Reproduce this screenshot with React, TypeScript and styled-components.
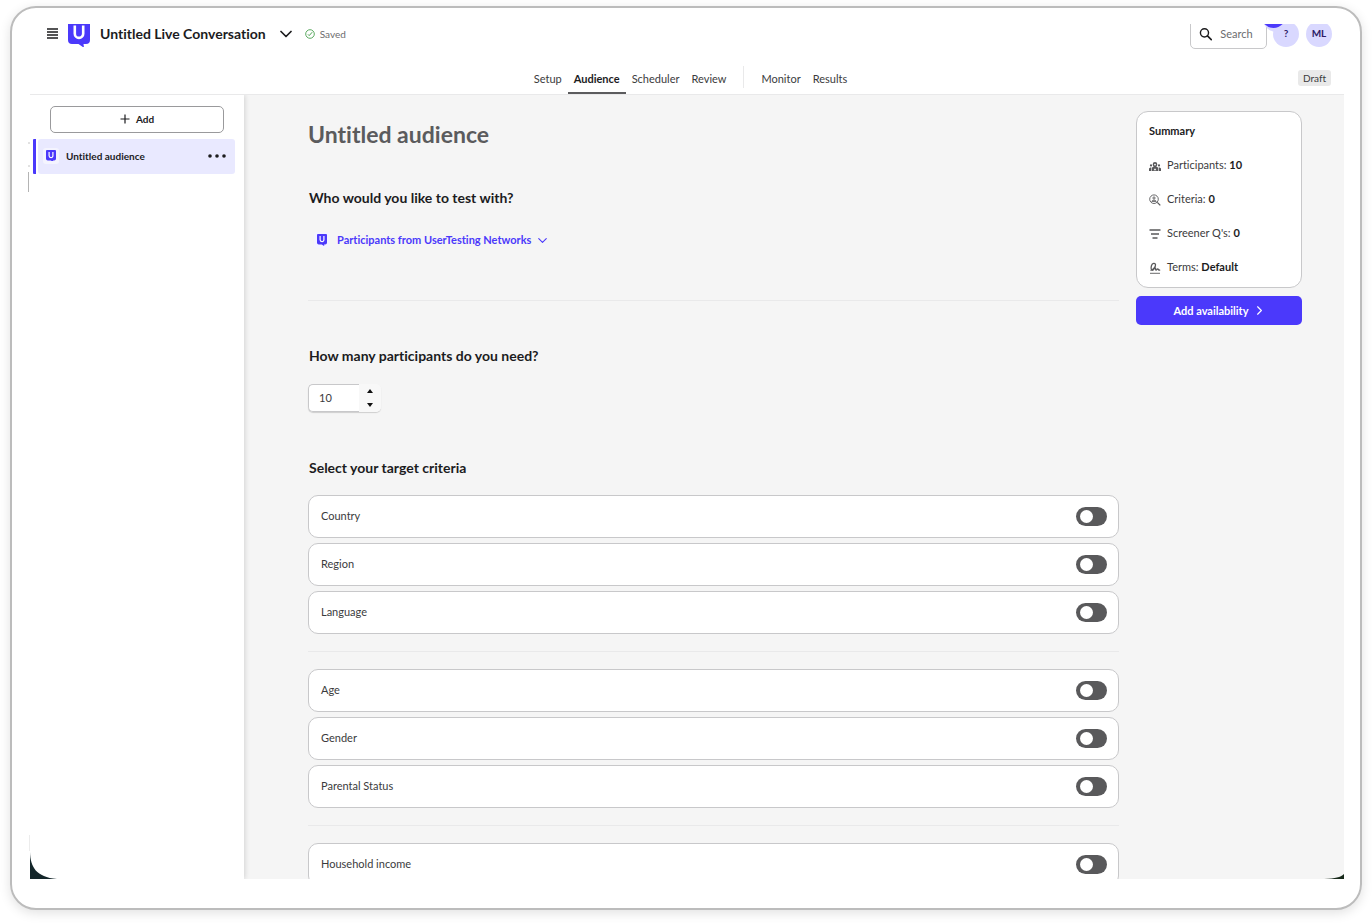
import React, { useState } from 'react';
import styled, { createGlobalStyle, css } from 'styled-components';

const color = {
  brand: '#4b39fb',
  brandSoft: '#e9e9ff',
  avatar: '#d9d8ff',
  ink: '#1c1c1e',
  text: '#3b3b3d',
  muted: '#6c6c6e',
  canvas: '#f5f5f5',
  line: '#e9e9ea',
  border: '#c8c8ca',
};

const GlobalStyle = createGlobalStyle`
  *, *::before, *::after { box-sizing: border-box; }
  body {
    margin: 0;
    background: #fff;
    color: ${color.text};
    font-family: Lato, "Liberation Sans", sans-serif;
    font-size: 11px;
    font-variant-ligatures: none;
    line-height: 16px;
  }
  button, input { font: inherit; font-variant-ligatures: none; color: inherit; }
`;

const Page = styled.div`
  height: 100vh;
  padding: 6px 10px 14px;
`;

const Frame = styled.div`
  position: relative;
  height: 100%;
  padding: 16px 16px 29px 18px;
  border: 2px solid #bcbcbc;
  border-radius: 26px;
  box-shadow: 0 3px 12px rgba(0, 0, 0, 0.12);
`;

const Screen = styled.div`
  position: relative;
  display: flex;
  flex-direction: column;
  height: 100%;
  overflow: hidden;
`;

const Header = styled.header`
  position: relative;
  z-index: 1;
  flex: none;
  border-bottom: 1px solid ${color.line};
  background: #fff;
`;

const TopBar = styled.div`
  display: flex;
  align-items: center;
  justify-content: space-between;
  height: 36px;
  margin-top: -8px;
  padding: 0 12px 0 17px;
`;

const Cluster = styled.div<{ $gap: number }>`
  display: flex;
  align-items: center;
  gap: ${(p) => p.$gap}px;
`;

const PlainButton = styled.button`
  display: inline-flex;
  align-items: center;
  padding: 0;
  border: 0;
  background: none;
  cursor: pointer;
`;

const TitleButton = styled(PlainButton)`
  gap: 14px;
  color: ${color.ink};
  font-size: 14px;
  font-weight: 700;
  line-height: 20px;
`;

const Saved = styled.span`
  display: flex;
  align-items: center;
  gap: 5px;
  margin-left: 3px;
  color: ${color.muted};
  font-size: 10px;
`;

const SearchBox = styled.label`
  display: flex;
  align-items: center;
  gap: 8px;
  width: 77px;
  height: 30px;
  padding: 0 8px;
  border: 1px solid ${color.border};
  border-radius: 5px;

  input {
    width: 40px;
    min-width: 0;
    padding: 0;
    border: 0;
    outline: 0;
    background: none;
  }
  input::placeholder { color: ${color.muted}; opacity: 1; }
`;

const RoundButton = styled.button`
  position: relative;
  width: 26px;
  height: 26px;
  padding: 0 0 2px;
  border: 0;
  border-radius: 50%;
  background: ${color.avatar};
  color: #2d1a66;
  font-size: 10px;
  font-weight: 700;
`;

const NoticeDot = styled.span`
  position: absolute;
  top: -18px;
  left: -12px;
  width: 25px;
  height: 25px;
  border-radius: 50%;
  background: ${color.brand};
  box-shadow: 3px 3px 0 1px ${color.avatar};
`;

const TabBar = styled.div`
  display: grid;
  grid-template-columns: 1fr auto 1fr;
  align-items: end;
  height: 42px;
  padding: 0 13px 0 20px;
`;

const Tabs = styled.nav`
  grid-column: 2;
  display: flex;
  align-items: flex-end;
`;

const Tab = styled.a<{ $active?: boolean }>`
  height: 30px;
  padding: 7px 6px 0;
  border-bottom: 2px solid transparent;
  color: ${color.text};
  text-decoration: none;
  ${(p) =>
    p.$active &&
    css`
      border-color: #5c5c5e;
      color: ${color.ink};
      font-weight: 700;
    `}
`;

const TabDivider = styled.span`
  width: 1px;
  height: 22px;
  margin: 0 11px 6px;
  background: ${color.line};
`;

const Badge = styled.span`
  justify-self: end;
  align-self: end;
  margin-bottom: 8px;
  padding: 0 5px;
  border-radius: 3px;
  background: #e9e9e9;
  color: ${color.text};
  font-size: 10px;
`;

const Body = styled.div`
  display: flex;
  flex: 1;
  min-height: 0;
`;

const Sidebar = styled.aside`
  position: relative;
  flex: none;
  width: 214px;
  padding-top: 11px;
  background: #fff;
  box-shadow: 1px 0 5px rgba(0, 0, 0, 0.14);
`;

const AddButton = styled.button`
  display: flex;
  align-items: center;
  justify-content: center;
  gap: 6px;
  width: 174px;
  height: 27px;
  margin: 0 auto 6px;
  padding-bottom: 2px;
  border: 1px solid #9a9a9c;
  border-radius: 5px;
  background: #fff;
  color: ${color.ink};
  font-size: 10px;
  font-weight: 700;
`;

const AudienceItem = styled.div`
  display: flex;
  margin: 0 9px 0 3px;
  border-left: 3px solid ${color.brand};
  border-radius: 1px;
`;

const AudienceRow = styled.div`
  display: flex;
  flex: 1;
  align-items: center;
  gap: 7px;
  height: 35px;
  margin-left: 2px;
  padding: 0 9px 2px 5px;
  border-radius: 3px;
  background: ${color.brandSoft};
  color: ${color.ink};
  font-size: 10px;
  font-weight: 700;

  button { margin-left: auto; }
`;

const LogoTile = styled.span`
  display: grid;
  place-items: center;
  width: 16px;
  height: 16px;
  border-radius: 3px;
  background: #f4f4ff;
`;

const Main = styled.main`
  display: grid;
  flex: 1;
  grid-template-columns: minmax(0, 1fr) 166px;
  gap: 17px;
  align-items: start;
  padding: 0 42px 0 64px;
  overflow: hidden;
  background: ${color.canvas};
`;

const Form = styled.div`
  display: flex;
  flex-direction: column;
  align-items: stretch;
  padding-top: 24px;
`;

const PageTitle = styled.h1`
  margin: 0 0 39px;
  color: #5b5b5d;
  font-size: 23px;
  font-weight: 700;
  line-height: 30px;
`;

const SectionTitle = styled.h2`
  margin: 0;
  padding-left: 1px;
  color: ${color.ink};
  font-size: 14px;
  font-weight: 700;
  line-height: 20px;
`;

const NetworkButton = styled(PlainButton)`
  align-self: flex-start;
  gap: 7px;
  height: 20px;
  margin: 22px 0 50px 6px;
  color: ${color.brand};
  font-weight: 700;
`;

const Rule = styled.hr<{ $space: number }>`
  width: 100%;
  height: 1px;
  margin: 0 0 ${(p) => p.$space}px;
  border: 0;
  background: ${color.line};
`;

const Stepper = styled.div`
  display: flex;
  width: 73px;
  height: 28px;
  margin: 18px 0 46px;
  border-radius: 5px;
  box-shadow: 0 1px 1px rgba(0, 0, 0, 0.16);

  input {
    width: 51px;
    padding: 0 0 0 10px;
    border: 1px solid ${color.border};
    border-right: 0;
    border-radius: 5px 0 0 5px;
    outline: 0;
    background: #fff;
    appearance: textfield;
  }
  input::-webkit-inner-spin-button { appearance: none; }
`;

const StepButtons = styled.div`
  display: flex;
  flex: 1;
  flex-direction: column;
  border-radius: 0 5px 5px 0;
  background: #f8f8f8;

  button {
    flex: 1;
    justify-content: center;
  }
`;

const CriteriaGroup = styled.div`
  display: flex;
  flex-direction: column;
  gap: 5px;
  margin: 17px 0;
`;

const CriterionCard = styled.label`
  display: flex;
  align-items: center;
  justify-content: space-between;
  height: 43px;
  padding: 0 11px 1px 12px;
  border: 1px solid ${color.border};
  border-radius: 10px;
  background: #fff;
`;

const Toggle = styled.input`
  width: 31px;
  height: 19px;
  margin: 0;
  padding: 3px 4px;
  border-radius: 10px;
  background: #59595b;
  appearance: none;
  cursor: pointer;

  &::before {
    content: '';
    display: block;
    width: 13px;
    height: 13px;
    border-radius: 50%;
    background: #fff;
  }
  &:checked { background: ${color.brand}; }
  &:checked::before { margin-left: auto; }
`;

const Aside = styled.aside`
  display: flex;
  flex-direction: column;
  gap: 8px;
  padding-top: 16px;
`;

const SummaryCard = styled.section`
  padding: 2px 12px 3px;
  border: 1px solid ${color.border};
  border-radius: 12px;
  background: #fff;
`;

const SummaryTitle = styled.h3`
  margin: 0;
  color: ${color.ink};
  font-size: 11px;
  line-height: 34px;
`;

const SummaryRow = styled.div`
  display: flex;
  align-items: center;
  gap: 6px;
  height: 34px;
  padding-bottom: 1px;

  svg { margin-top: 3px; }
  b { color: ${color.ink}; }
`;

const PrimaryButton = styled.button`
  display: flex;
  align-items: center;
  justify-content: center;
  gap: 7px;
  height: 29px;
  border: 0;
  border-radius: 5px;
  background: ${color.brand};
  color: #fff;
  font-weight: 700;
`;

const EdgeMark = styled.svg<{ $side: 'left' | 'right' }>`
  position: absolute;
  bottom: 29px;
  ${(p) => p.$side}: 16px;
`;

const EdgeTicks = styled.svg`
  position: absolute;
  top: 134px;
  left: 16px;
`;

const Logo = ({ size }: { size: number }) => (
  <svg width={size} height={(size * 26) / 22} viewBox="0 0 22 26" aria-hidden="true">
    <path
      d="M2 0h18a2 2 0 0 1 2 2v17a4 4 0 0 1-4 4h-2.500l.5 3.800-5.500-3.800H4a4 4 0 0 1-4-4V2a2 2 0 0 1 2-2z"
      fill={color.brand}
    />
    <path d="M6.800 4.500v8.200a4.200 4.200 0 0 0 8.400 0V4.500" fill="none" stroke="#fff" strokeWidth="2.600" />
  </svg>
);

const Chevron = ({ size = 12, turn = 0, weight = 1.5 }) => (
  <svg width={size} height={size} viewBox="0 0 12 12" aria-hidden="true">
    <path
      d="M1 3.500 6 8.500l5-5"
      fill="none"
      stroke="currentColor"
      strokeWidth={weight}
      strokeLinecap="round"
      strokeLinejoin="round"
      transform={`rotate(${turn} 6 6)`}
    />
  </svg>
);

const MenuIcon = () => (
  <svg width="11" height="12" viewBox="0 0 11 12" aria-hidden="true">
    <path d="M0 1h11M0 4h11M0 7h11M0 10h11" stroke={color.ink} strokeWidth="1.400" />
  </svg>
);

const SavedIcon = () => (
  <svg width="10" height="10" viewBox="0 0 10 10" fill="none" stroke="#4aa04f" aria-hidden="true">
    <circle cx="5" cy="5" r="4.300" strokeWidth="0.900" />
    <path d="m3 5.400 1.200 1.200 3-3.400" strokeWidth="1" />
  </svg>
);

const SearchIcon = () => (
  <svg width="14" height="14" viewBox="0 0 14 14" fill="none" stroke={color.ink} aria-hidden="true">
    <circle cx="5.800" cy="5.800" r="4.300" strokeWidth="1.500" />
    <path d="m9 9 4 4" strokeWidth="1.700" strokeLinecap="round" />
  </svg>
);

const PlusIcon = () => (
  <svg width="10" height="10" viewBox="0 0 10 10" aria-hidden="true">
    <path d="M5 .5v9M.5 5h9" stroke={color.ink} strokeWidth="1.200" />
  </svg>
);

const DotsIcon = () => (
  <svg width="18" height="4" viewBox="0 0 18 4" fill={color.ink} aria-hidden="true">
    <circle cx="2" cy="2" r="1.800" />
    <circle cx="9" cy="2" r="1.800" />
    <circle cx="16" cy="2" r="1.800" />
  </svg>
);

const Caret = ({ up }: { up?: boolean }) => (
  <svg width="6" height="4" viewBox="0 0 6 4" aria-hidden="true">
    <path d={up ? 'M0 4 3 0l3 4z' : 'M0 0h6L3 4z'} fill="#111" />
  </svg>
);

const PeopleIcon = () => (
  <svg width="12" height="12" viewBox="0 0 12 12" fill="#59595b" aria-hidden="true">
    <path d="M3.700 4.300a2.300 2.300 0 0 1 4.600 0c0 1-.5 1.900-1.100 2.300L9 7.500V11H3V7.500l1.800-.9c-.6-.4-1.100-1.300-1.100-2.300z" />
    <circle cx="6" cy="4.600" r="0.900" fill="#fff" />
    <path d="M4.600 10.200 6 8.300l1.400 1.900z" fill="#fff" />
    <circle cx="2" cy="5.400" r="1.100" />
    <circle cx="10" cy="5.400" r="1.100" />
    <path d="M0 11V8.600l1.200-1.200h1.200V11zM12 11V8.600l-1.200-1.200H9.600V11z" />
  </svg>
);

const CriteriaIcon = () => (
  <svg width="12" height="12" viewBox="0 0 12 12" fill="none" stroke="#59595b" aria-hidden="true">
    <circle cx="5" cy="5.200" r="4.300" strokeWidth="0.900" />
    <circle cx="5" cy="4" r="1.100" strokeWidth="0.900" />
    <path d="M2.800 7.400c.4-1.700 4-1.700 4.400 0z" strokeWidth="0.900" />
    <path d="m8.300 8.400 3 3" strokeWidth="1.300" />
  </svg>
);

const FilterIcon = () => (
  <svg width="12" height="12" viewBox="0 0 12 12" stroke="#59595b" aria-hidden="true">
    <path d="M.5 2h11M2 6h8M3.500 10h5" strokeWidth="1.300" />
  </svg>
);

const TermsIcon = () => (
  <svg width="12" height="12" viewBox="0 0 12 12" fill="none" stroke="#59595b" aria-hidden="true">
    <path
      d="M1.500 8.300C4.500 7.800 6.800 4.600 6.500 2.600 6.200.8 3.300 1 2.500 3.500 1.800 5.800 2 8.300 3.500 8.300c1.400 0 1.600-2.500 2.700-2.500.9 0-.1 2.200.8 2.400.9.200 1-1.500 1.800-1.300.7.200.2 1.500 2.400 1.300"
      strokeWidth="1.300"
    />
    <path d="M1 11.300h10" strokeWidth="0.900" />
  </svg>
);

const criteriaGroups = [
  ['Country', 'Region', 'Language'],
  ['Age', 'Gender', 'Parental Status'],
  ['Household income'],
];

export default function App() {
  const [count, setCount] = useState(10);

  const summary = [
    { icon: <PeopleIcon />, label: 'Participants:', value: count },
    { icon: <CriteriaIcon />, label: 'Criteria:', value: 0 },
    { icon: <FilterIcon />, label: "Screener Q's:", value: 0 },
    { icon: <TermsIcon />, label: 'Terms:', value: 'Default' },
  ];

  return (
    <Page>
      <GlobalStyle />
      <Frame>
        <Screen>
          <Header>
            <TopBar>
              <Cluster $gap={10}>
                <PlainButton aria-label="Menu"><MenuIcon /></PlainButton>
                <Logo size={22} />
                <TitleButton>
                  Untitled Live Conversation
                  <Chevron weight={1.7} />
                </TitleButton>
                <Saved><SavedIcon />Saved</Saved>
              </Cluster>
              <Cluster $gap={6}>
                <SearchBox>
                  <SearchIcon />
                  <input type="text" placeholder="Search" aria-label="Search" />
                </SearchBox>
                <Cluster $gap={7}>
                  <RoundButton aria-label="Help"><NoticeDot />?</RoundButton>
                  <RoundButton aria-label="Account">ML</RoundButton>
                </Cluster>
              </Cluster>
            </TopBar>
            <TabBar>
              <Tabs>
                <Tab href="#setup">Setup</Tab>
                <Tab href="#audience" $active>Audience</Tab>
                <Tab href="#scheduler">Scheduler</Tab>
                <Tab href="#review">Review</Tab>
                <TabDivider />
                <Tab href="#monitor">Monitor</Tab>
                <Tab href="#results">Results</Tab>
              </Tabs>
              <Badge>Draft</Badge>
            </TabBar>
          </Header>
          <Body>
            <Sidebar>
              <AddButton><PlusIcon />Add</AddButton>
              <AudienceItem>
                <AudienceRow>
                  <LogoTile><Logo size={10} /></LogoTile>
                  Untitled audience
                  <PlainButton aria-label="Audience options"><DotsIcon /></PlainButton>
                </AudienceRow>
              </AudienceItem>
            </Sidebar>
            <Main>
              <Form>
                <PageTitle>Untitled audience</PageTitle>
                <SectionTitle>Who would you like to test with?</SectionTitle>
                <NetworkButton>
                  <LogoTile><Logo size={10} /></LogoTile>
                  Participants from UserTesting Networks
                  <Chevron size={9} />
                </NetworkButton>
                <Rule $space={45} />
                <SectionTitle id="participants">How many participants do you need?</SectionTitle>
                <Stepper>
                  <input
                    type="number"
                    aria-labelledby="participants"
                    value={count}
                    onChange={(e) => setCount(Number(e.target.value))}
                  />
                  <StepButtons>
                    <PlainButton aria-label="Increase" onClick={() => setCount(count + 1)}><Caret up /></PlainButton>
                    <PlainButton aria-label="Decrease" onClick={() => setCount(count - 1)}><Caret /></PlainButton>
                  </StepButtons>
                </Stepper>
                <SectionTitle>Select your target criteria</SectionTitle>
                {criteriaGroups.map((group, index) => (
                  <React.Fragment key={group[0]}>
                    {index > 0 && <Rule $space={0} />}
                    <CriteriaGroup>
                      {group.map((name) => (
                        <CriterionCard key={name}>
                          {name}
                          <Toggle type="checkbox" role="switch" />
                        </CriterionCard>
                      ))}
                    </CriteriaGroup>
                  </React.Fragment>
                ))}
              </Form>
              <Aside>
                <SummaryCard>
                  <SummaryTitle>Summary</SummaryTitle>
                  {summary.map((row) => (
                    <SummaryRow key={row.label}>
                      {row.icon}
                      <span>{row.label} <b>{row.value}</b></span>
                    </SummaryRow>
                  ))}
                </SummaryCard>
                <PrimaryButton>
                  Add availability
                  <Chevron size={9} turn={-90} />
                </PrimaryButton>
              </Aside>
            </Main>
          </Body>
        </Screen>
        <EdgeTicks width="2" height="50" viewBox="0 0 2 50" aria-hidden="true">
          <path d="M0 1h2M0 24h2" stroke="#c4c4c4" />
          <path d="M.5 30v20" stroke="#b4b4b4" />
        </EdgeTicks>
        <EdgeMark $side="left" width="31" height="44" viewBox="0 0 31 44" aria-hidden="true">
          <path d="M1.500 0v16" stroke="#ececec" />
          <path d="M2 17c.5 15 6 25 27 27H2z" fill="#14262a" />
        </EdgeMark>
        <EdgeMark $side="right" width="20" height="5" viewBox="0 0 20 5" aria-hidden="true">
          <path d="M20 0c-4 3.500-8 4.300-20 5h20z" fill="#17291a" />
        </EdgeMark>
      </Frame>
    </Page>
  );
}
